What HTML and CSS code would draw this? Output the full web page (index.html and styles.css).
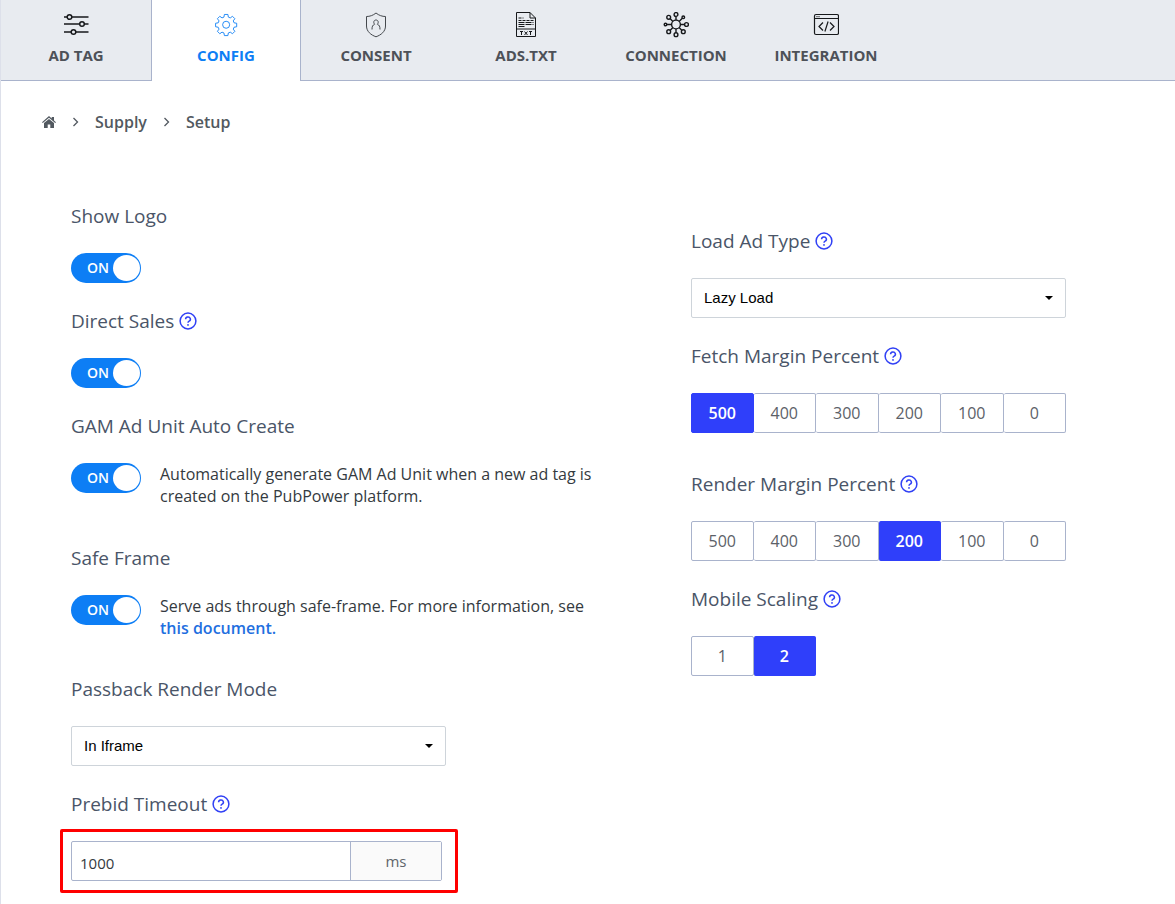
FILE: index.html
```html
<!DOCTYPE html>
<html lang="en">
<head>
<meta charset="utf-8">
<meta name="viewport" content="width=device-width, initial-scale=1">
<title>Supply Setup</title>
<link rel="stylesheet" href="styles.css">
</head>
<body>
<svg class="sprite" aria-hidden="true">
  <symbol id="help" viewBox="0 0 18 18">
    <circle cx="9" cy="9" r="7.9"/>
    <path d="M6.6 7.2a2.4 2.2 0 1 1 3.5 1.9c-.8.4-1.1.8-1.1 1.6"/>
    <circle class="dot" cx="9" cy="12.9" r=".9"/>
  </symbol>
  <symbol id="chevron" viewBox="0 0 7 10"><path d="M1.500 1l4 4-4 4"/></symbol>
</svg>
<div class="page">
  <nav class="tabs" aria-label="Sections">
    <a class="tab" href="#adtag">
      <svg class="tab-icon" viewBox="0 0 26 26"><g stroke-width="1.5"><path d="M1 5h3.500M8.500 5H25.500M1 12h15M21 12h4.500M1 20h7M13 20h12.500"/><circle cx="6.500" cy="5" r="2.300"/><circle cx="19" cy="12" r="2.300"/><circle cx="10.500" cy="20" r="2.300"/></g></svg>
      <span>AD TAG</span>
    </a>
    <a class="tab tab-active" href="#config" aria-current="page">
      <svg class="tab-icon" viewBox="0 0 26 26"><g transform="translate(1.700 .7) scale(.88)"><path d="M11 2h4l.5 3 2.200.9 2.500-1.800 2.700 2.700-1.800 2.500.9 2.200 3 .5v4l-3 .5-.9 2.200 1.800 2.500-2.700 2.700-2.500-1.800-2.200.9-.5 3h-4l-.5-3-2.200-.9-2.500 1.800-2.700-2.700 1.800-2.500L4 16.500l-3-.5v-4l3-.5.9-2.200-1.800-2.500 2.700-2.700 2.500 1.800 2.200-.9z"/><circle cx="13" cy="13.700" r="4"/></g></svg>
      <span>CONFIG</span>
    </a>
    <a class="tab" href="#consent">
      <svg class="tab-icon tab-icon-thin" viewBox="0 0 26 26"><path d="M13 1c3 2.500 6.300 3.500 9.500 3.500V14c0 5.500-4.500 9-9.500 10.800C8 23 3.500 19.500 3.500 14V4.500C6.700 4.500 10 3.500 13 1z"/><path d="M9 17.500c0-3 .6-4.400 2.600-5.200-1.600-2-.7-4.300 1.400-4.300s3 2.300 1.400 4.300c2 .8 2.600 2.200 2.600 5.200"/></svg>
      <span>CONSENT</span>
    </a>
    <a class="tab" href="#adstxt">
      <svg class="tab-icon" viewBox="0 0 26 26"><path d="M3.500.5H17l5.500 5.500v18.500h-19zM17 .5V6h5.500M3.500 17h19"/><path stroke-dasharray="3 1" d="M5.500 6h5M5.500 8.500h15"/><path stroke-dasharray="6 1" d="M5.500 10.500h15M5.500 12.500h15M5.500 14.500h7"/><path d="M7 19.500h3M8.500 19.500v3.500M11.500 19.500l3 3.500M14.500 19.500l-3 3.500M16 19.500h3M17.500 19.500v3.500"/></svg>
      <span>ADS.TXT</span>
    </a>
    <a class="tab" href="#connection">
      <svg class="tab-icon" viewBox="0 0 26 26"><g stroke-width="1.400"><circle cx="13" cy="12.500" r="4.400"/><circle cx="13" cy="2.500" r="1.900"/><circle cx="13" cy="22.700" r="1.900"/><circle cx="2.500" cy="12.500" r="1.300"/><circle cx="23.500" cy="12.500" r="1.900"/><circle cx="5.700" cy="5.300" r="1.900"/><circle cx="20.300" cy="5.300" r="1.300"/><circle cx="5.700" cy="19.700" r="1.900"/><circle cx="20.300" cy="19.700" r="1.900"/><path d="M13 4.400v3.700M13 16.900v3.900M3.800 12.500h4.800M17.400 12.500h4.200M7 6.600l2.900 2.800M16.100 9.400l3.200-3.100M7 18.400l2.900-2.800M16.100 15.600l2.900 2.800"/></g></svg>
      <span>CONNECTION</span>
    </a>
    <a class="tab" href="#integration">
      <svg class="tab-icon" viewBox="0 0 26 26"><g stroke-width="1.200"><rect x="1.500" y="2.500" width="24" height="20" rx="1.500"/><path d="M1.500 6.500h24M3.500 4.600h1M5.500 4.600h1M10 10.500L6 14.500l4 4M17 10.500l4 4-4 4M15.100 9.500l-3.200 10"/></g></svg>
      <span>INTEGRATION</span>
    </a>
  </nav>

  <nav class="crumbs" aria-label="Breadcrumb">
    <a href="#home" aria-label="Home"><svg class="home" viewBox="0 0 14 12"><path d="M7 0l2.700 2.400V1H12v3.500L14 6.200l-.8.8L7 1.700.8 7 0 6.200z"/><path d="M7 2.900l5 4.200V12H8.300V8.500H5.700V12H2V7.100z"/></svg></a>
    <svg class="chevron"><use href="#chevron"/></svg>
    <a href="#supply">Supply</a>
    <svg class="chevron"><use href="#chevron"/></svg>
    <a href="#setup">Setup</a>
  </nav>

  <form class="settings">
    <div class="column">
      <div class="field">
        <label class="title" for="logo">Show Logo</label>
        <div class="switch-row">
          <span class="toggle"><input type="checkbox" id="logo" checked><span class="toggle-text">ON</span></span>
        </div>
      </div>
      <div class="field">
        <div class="title"><label for="sales">Direct Sales</label><svg class="help"><use href="#help"/></svg></div>
        <div class="switch-row">
          <span class="toggle"><input type="checkbox" id="sales" checked><span class="toggle-text">ON</span></span>
        </div>
      </div>
      <div class="field field-spaced">
        <label class="title" for="gam">GAM Ad Unit Auto Create</label>
        <div class="switch-row">
          <span class="toggle"><input type="checkbox" id="gam" checked><span class="toggle-text">ON</span></span>
          <p class="note">Automatically generate GAM Ad Unit when a new ad tag is created on the PubPower platform.</p>
        </div>
      </div>
      <div class="field field-linked">
        <label class="title" for="safe">Safe Frame</label>
        <div class="switch-row">
          <span class="toggle"><input type="checkbox" id="safe" checked><span class="toggle-text">ON</span></span>
          <p class="note">Serve ads through safe-frame. For more information, see <a href="#document">this document.</a></p>
        </div>
      </div>
      <div class="field">
        <label class="title" for="passback">Passback Render Mode</label>
        <select class="select" id="passback"><option>In Iframe</option></select>
      </div>
      <div class="field">
        <div class="title"><label for="timeout">Prebid Timeout</label><svg class="help"><use href="#help"/></svg></div>
        <div class="input-group">
          <input type="text" id="timeout" value="1000">
          <span class="unit">ms</span>
          <span class="highlight"></span>
        </div>
      </div>
    </div>

    <div class="column column-right">
      <div class="field">
        <div class="title"><label for="load">Load Ad Type</label><svg class="help"><use href="#help"/></svg></div>
        <select class="select" id="load"><option>Lazy Load</option></select>
      </div>
      <div class="field field-spaced">
        <div class="title"><span id="fetch">Fetch Margin Percent</span><svg class="help"><use href="#help"/></svg></div>
        <div class="segments" role="group" aria-labelledby="fetch">
          <button type="button" class="selected" aria-pressed="true">500</button><button type="button">400</button><button type="button">300</button><button type="button">200</button><button type="button">100</button><button type="button">0</button>
        </div>
      </div>
      <div class="field">
        <div class="title"><span id="render">Render Margin Percent</span><svg class="help"><use href="#help"/></svg></div>
        <div class="segments" role="group" aria-labelledby="render">
          <button type="button">500</button><button type="button">400</button><button type="button">300</button><button type="button" class="selected" aria-pressed="true">200</button><button type="button">100</button><button type="button">0</button>
        </div>
      </div>
      <div class="field">
        <div class="title"><span id="scaling">Mobile Scaling</span><svg class="help"><use href="#help"/></svg></div>
        <div class="segments" role="group" aria-labelledby="scaling">
          <button type="button">1</button><button type="button" class="selected" aria-pressed="true">2</button>
        </div>
      </div>
    </div>
  </form>
</div>
</body>
</html>
```

FILE: styles.css
```css
* { box-sizing: border-box; }
body {
  margin: 0;
  background: #fff;
  color: #4b5563;
  font-family: "Open Sans", "Noto Sans", sans-serif;
  font-size: 16px;
}
a { color: inherit; text-decoration: none; }
.sprite { display: none; }
.page {
  min-height: 100vh;
  border-left: 1px solid #dde0ea;
}

.tabs {
  display: flex;
  height: 81px;
  background: linear-gradient(#e8ebf0, #e8ebf0) 0 0 / 100% 80px no-repeat;
  border-bottom: 1px solid #a9b3cc;
}
.tab {
  display: flex;
  flex-direction: column;
  align-items: center;
  gap: 6px;
  width: 150px;
  height: 81px;
  padding-top: 12px;
  color: #4d5158;
  font-size: 15px;
  font-weight: 700;
  line-height: 22px;
}
.tab-active {
  background: #fff;
  color: #0d7ef5;
  border: solid #a9b3cc;
  border-width: 0 1px;
}
.tab-icon {
  width: 26px;
  height: 26px;
  fill: none;
  stroke: #16181b;
  stroke-width: 1;
}
.tab-icon-thin { stroke: #44484d; }
.tab-active .tab-icon { stroke: #0d7ef5; }

.crumbs {
  display: flex;
  align-items: center;
  gap: 16px;
  padding: 30px 41px 0;
  color: #525960;
  font-weight: 600;
  line-height: 22px;
}
.crumbs a { display: flex; }
.home { width: 14px; height: 12px; fill: #525960; }
.chevron {
  width: 7px;
  height: 10px;
  fill: none;
  stroke: #525960;
  stroke-width: 1.3;
}

.settings {
  display: grid;
  grid-template-columns: minmax(0, 620px) minmax(0, 1fr);
  padding: 71px 0 12px 70px;
}
.column {
  display: flex;
  flex-direction: column;
  gap: 26px;
}
.column-right { padding-top: 25px; }
.field-spaced { padding-bottom: 13px; }
.field-linked { padding-bottom: 12px; }
.title {
  display: flex;
  align-items: center;
  gap: 5px;
  margin-bottom: 25px;
  color: #4a5568;
  font-size: 19px;
  line-height: 24px;
}
.help {
  width: 18px;
  height: 18px;
  fill: none;
  stroke: #3040f5;
  stroke-width: 1.5;
}
#help .dot { fill: #3040f5; stroke: none; }

.switch-row {
  display: flex;
  gap: 19px;
}
.toggle {
  display: flex;
  position: relative;
  flex: none;
  height: 30px;
}
.toggle input {
  appearance: none;
  display: flex;
  align-items: center;
  justify-content: flex-end;
  width: 70px;
  height: 30px;
  margin: 0;
  padding-right: 1px;
  border-radius: 15px;
  background: #0d7ef5;
}
.toggle input::before {
  content: "";
  width: 27px;
  height: 26px;
  border-radius: 50%;
  background: #fff;
}
.toggle-text {
  position: absolute;
  left: 16px;
  top: 5px;
  color: #fff;
  font-size: 14px;
  font-weight: 600;
  line-height: 20px;
  pointer-events: none;
}
.note {
  max-width: 450px;
  margin: 0;
  color: #343a40;
  line-height: 22px;
}
.note a { color: #1f6fe0; font-weight: 600; }

.select {
  appearance: none;
  display: block;
  width: 100%;
  max-width: 375px;
  height: 40px;
  padding: 0 12px 2px;
  border: 1px solid #ced4da;
  border-radius: 2px;
  background: url("data:image/svg+xml,%3Csvg xmlns='http://www.w3.org/2000/svg' width='8' height='4'%3E%3Cpath d='M0 0h8L4 4z'/%3E%3C/svg%3E") right 12px center no-repeat #fff;
  color: #000;
  font-family: "Liberation Sans", Arial, sans-serif;
  font-size: 15px;
}
.input-group {
  display: flex;
  position: relative;
  max-width: 371px;
  height: 40px;
  border: 1px solid #a9b3cc;
  border-radius: 2px;
}
.input-group input {
  flex: 1;
  min-width: 0;
  padding: 4px 8px 0;
  border: 0;
  background: none;
  color: #343a40;
  font-family: inherit;
  font-size: 15px;
}
.unit {
  width: 91px;
  border-left: 1px solid #a9b3cc;
  background: #fafafa;
  color: #60656b;
  font-size: 15px;
  line-height: 38px;
  text-align: center;
}
.highlight {
  position: absolute;
  inset: -13px -17px -13px -12px;
  border: 3px solid #f00;
  border-radius: 2px;
  pointer-events: none;
}

.segments {
  display: grid;
  grid-template-columns: repeat(6, 1fr);
  max-width: 375px;
}
.segments button {
  height: 40px;
  padding: 0;
  border: 1px solid #a9b3cc;
  border-left-width: 0;
  border-radius: 2px;
  background: #fff;
  color: #5c6168;
  font-family: inherit;
  font-size: 16px;
}
.segments button:first-child { border-left-width: 1px; }
.segments .selected {
  border-color: #2f3ffa;
  background: #2f3ffa;
  color: #fff;
  font-weight: 600;
}
```
